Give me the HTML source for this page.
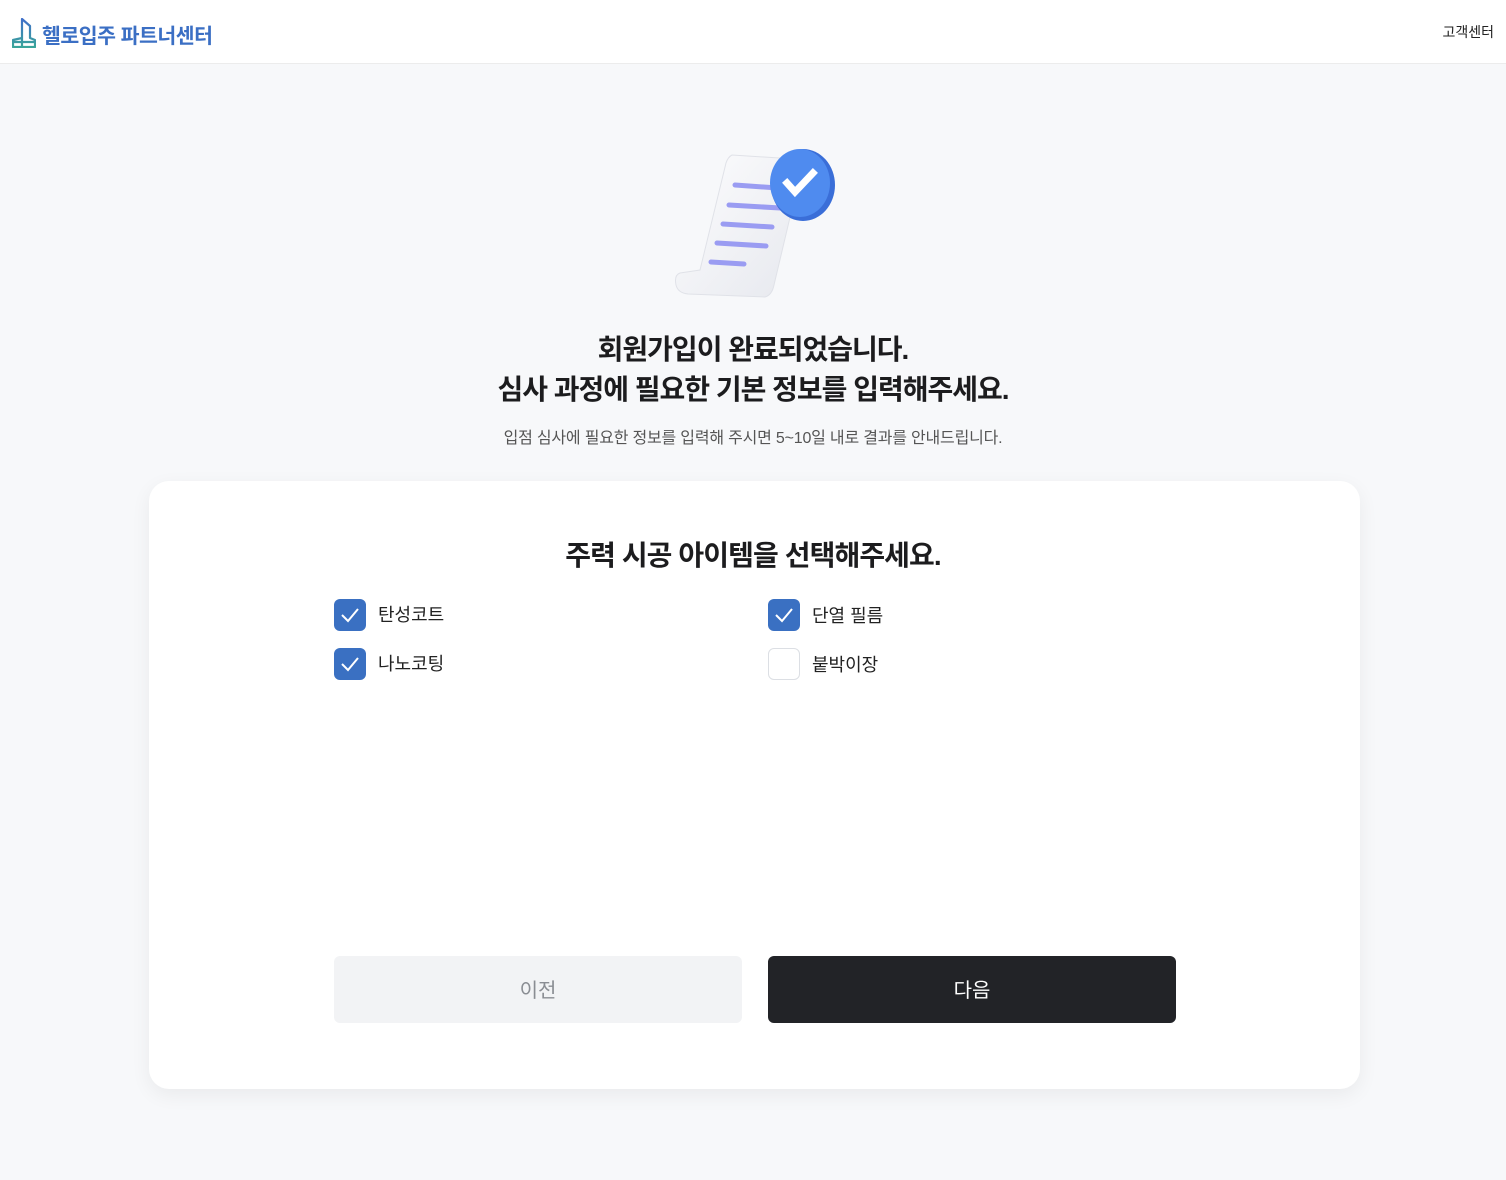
<!DOCTYPE html>
<html><head><meta charset="utf-8"><style>
*{margin:0;padding:0;box-sizing:border-box}
body{width:1506px;height:1180px;background:#f7f8fa;font-family:"Liberation Sans","Noto Sans CJK KR",sans-serif;position:relative;overflow:hidden;color:#222}
.hdr{position:absolute;left:0;top:0;width:1506px;height:64px;background:#fff;border-bottom:1px solid #ececec}
.logo{position:absolute;left:12px;top:18px}
.brand{position:absolute;left:42px;top:19px;font-size:20.5px;font-weight:700;color:#3b6fc4;letter-spacing:-0.5px}
.cs{position:absolute;right:12px;top:22px;font-size:14px;color:#222}
.t{position:absolute;left:0;width:1506px;text-align:center;font-weight:700;font-size:28px;letter-spacing:-1px;color:#1c1c1e}
.sub{position:absolute;left:0;top:424px;width:1506px;text-align:center;font-size:16px;color:#555;letter-spacing:-0.2px}
.card{position:absolute;left:149px;top:481px;width:1211px;height:608px;background:#fff;border-radius:20px;box-shadow:0 6px 20px rgba(0,0,0,0.06)}
.ch{position:absolute;left:0;top:534px;width:1506px;text-align:center;font-weight:700;font-size:28px;letter-spacing:-0.9px;color:#1c1c1e}
.cb{position:absolute;width:32px;height:32px;border-radius:6px;background:#3a70c2}
.cb.off{background:#fff;border:1px solid #dcdfe4}
.lb{position:absolute;font-size:18px;color:#222}
.btn{position:absolute;top:956px;width:408px;height:67px;border-radius:6px;text-align:center;line-height:70px;font-size:20px}
</style></head><body>
<div class="hdr">
<svg class="logo" width="24" height="30" viewBox="0 0 24 30"><defs><linearGradient id="g" x1="0" y1="0" x2="0" y2="1"><stop offset="0" stop-color="#3f6fc9"/><stop offset="1" stop-color="#3aa59a"/></linearGradient></defs><path d="M10 1 L18 8 L18 20 L23 22 L23 29 L1 29 L1 22 L10 20 Z M10 20 L10 29 M1 24 L23 24" fill="none" stroke="url(#g)" stroke-width="2.2" stroke-linejoin="round"/></svg>
<div class="brand">헬로입주 파트너센터</div>
<div class="cs">고객센터</div>
</div>
<svg style="position:absolute;left:670px;top:145px" width="170" height="160" viewBox="0 0 170 160">
<defs><linearGradient id="p" x1="0" y1="0" x2="1" y2="1"><stop offset="0" stop-color="#fdfdfe"/><stop offset="1" stop-color="#e6e8ee"/></linearGradient></defs>
<path d="M62 10 Q58 12 56 18 L30 125 L10 128 Q4 130 6 140 Q8 148 18 149 L95 152 Q102 150 104 140 L130 30 Q132 18 125 14 Z" fill="url(#p)" stroke="#e0e2e8"/>
<g stroke="#9a9cf2" stroke-width="5" stroke-linecap="round"><line x1="65" y1="40" x2="108" y2="43"/><line x1="59" y1="60" x2="110" y2="63"/><line x1="53" y1="79" x2="102" y2="82"/><line x1="47" y1="98" x2="96" y2="101"/><line x1="41" y1="117" x2="74" y2="119"/></g>
<ellipse cx="133" cy="40" rx="32" ry="36" fill="#3a6ed8"/>
<ellipse cx="130" cy="38" rx="30" ry="34" fill="#4f8bef"/>
<path d="M117 38 L125 47 L143 28" fill="none" stroke="#fff" stroke-width="7" stroke-linecap="square"/>
</svg>
<div class="t" style="top:328px">회원가입이 완료되었습니다.</div>
<div class="t" style="top:368px">심사 과정에 필요한 기본 정보를 입력해주세요.</div>
<div class="sub">입점 심사에 필요한 정보를 입력해 주시면 5~10일 내로 결과를 안내드립니다.</div>
<div class="card"></div>
<div class="ch">주력 시공 아이템을 선택해주세요.</div>
<div class="cb" style="left:334px;top:599px"><svg width="32" height="32"><path d="M8 16 L14 22 L24 10" fill="none" stroke="#fff" stroke-width="2"/></svg></div>
<div class="lb" style="left:378px;top:601px">탄성코트</div>
<div class="cb" style="left:334px;top:648px"><svg width="32" height="32"><path d="M8 16 L14 22 L24 10" fill="none" stroke="#fff" stroke-width="2"/></svg></div>
<div class="lb" style="left:378px;top:650px">나노코팅</div>
<div class="cb" style="left:768px;top:599px"><svg width="32" height="32"><path d="M8 16 L14 22 L24 10" fill="none" stroke="#fff" stroke-width="2"/></svg></div>
<div class="lb" style="left:812px;top:602px">단열 필름</div>
<div class="cb off" style="left:768px;top:648px"></div>
<div class="lb" style="left:812px;top:651px">붙박이장</div>
<div class="btn" style="left:334px;background:#f2f3f5;color:#8a8d93">이전</div>
<div class="btn" style="left:768px;background:#222327;color:#fff">다음</div>
</body></html>
